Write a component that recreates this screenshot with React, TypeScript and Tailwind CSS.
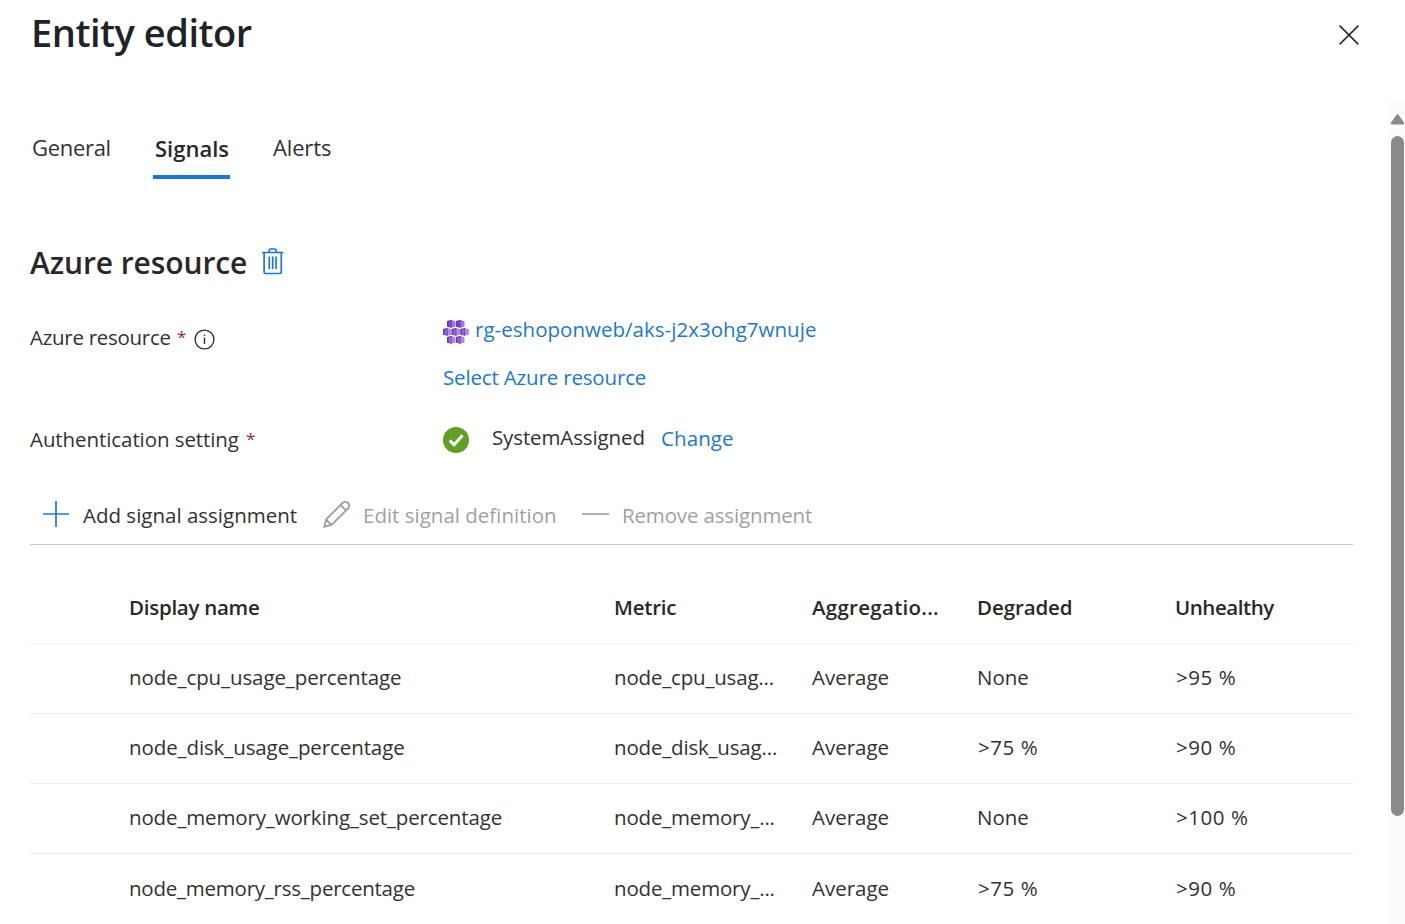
import React from "react";

type Row = { name: string; tracking: string; metric: string; agg: string; degraded: string; unhealthy: string };

const rows: Row[] = [
  { name: "node_cpu_usage_percentage", tracking: "tracking-[-0.1px]", metric: "node_cpu_usag...", agg: "Average", degraded: "None", unhealthy: ">95 %" },
  { name: "node_disk_usage_percentage", tracking: "tracking-[-0.1px]", metric: "node_disk_usag...", agg: "Average", degraded: ">75 %", unhealthy: ">90 %" },
  { name: "node_memory_working_set_percentage", tracking: "tracking-[-0.14px]", metric: "node_memory_...", agg: "Average", degraded: "None", unhealthy: ">100 %" },
  { name: "node_memory_rss_percentage", tracking: "tracking-[-0.23px]", metric: "node_memory_...", agg: "Average", degraded: ">75 %", unhealthy: ">90 %" },
];

const pods = [
  [4, 0], [13, 0],
  [0, 8], [8.7, 8], [17.4, 8],
  [4, 16], [13, 16],
];

function ClusterIcon() {
  return (
    <svg width="26" height="24" viewBox="0 0 26 24" className="mt-[5px] shrink-0">
      {pods.map(([x, y]) => (
        <g key={`${x}-${y}`} transform={`translate(${x} ${y})`}>
          <path d="M0 1.1 4.3 0 8.5 1.2V6.4L4.3 7.8 0 6.6Z" fill={y === 0 ? "#a56cf0" : "#b283f3"} />
          <path d="M0 1.1 4.6 .1V7.7L0 6.6Z" fill="#6a3aa8" />
          <path d="M1.6 1.7 3.9 1.1V6.8L1.6 6.2Z" fill={y === 0 ? "#7d47d0" : "#9b66dc"} />
        </g>
      ))}
    </svg>
  );
}

function TrashIcon() {
  return (
    <svg width="22" height="27" viewBox="0 0 22 27" fill="none" stroke="#1a78d4" strokeWidth="1.7" className="mb-[4px]">
      <path d="M0 4.5H21.4M7.3 4V2.3Q7.3 1 8.6 1H12.8Q14.1 1 14.1 2.3V4M2.1 4.5V24Q2.1 25.5 3.6 25.5H17.8Q19.3 25.5 19.3 24V4.5M7.3 8.5V21M10.7 8.5V21M14.1 8.5V21" />
    </svg>
  );
}

function Threshold({ value }: { value: string }) {
  return value.startsWith(">") ? <span className="pl-[1px] tracking-[0.55px]">{value}</span> : <span>{value}</span>;
}

export default function App() {
  return (
    <div className="flex h-[924px] w-[1405px] flex-col overflow-hidden bg-white font-['Open_Sans','Noto_Sans',sans-serif] text-[20.5px] leading-[28px] whitespace-nowrap text-[#323130]">
      <header className="flex h-[101px] shrink-0 items-start justify-between pl-[31px] pr-[46px]">
        <h1 className="pt-[6px] text-[38px] leading-[52px] font-semibold tracking-[-0.48px] text-[#1f2328]">Entity editor</h1>
        <svg className="mt-[25px]" width="20" height="20" viewBox="0 0 20 20" stroke="#292827" strokeWidth="1.5">
          <path d="M.6.6 19.4 19.4M19.4.6.6 19.4" />
        </svg>
      </header>
      <div className="flex min-h-0 flex-1">
        <main className="w-[1386px] pl-[30px] pr-[33px]">
          <nav className="flex h-[78px] items-end text-[22px] leading-[30px]">
            <div className="ml-[2px] w-[121px] pb-[17px] tracking-[-0.3px]">General</div>
            <div className="w-[77px] border-b-4 border-[#1a78d4] pb-[12px] pl-[2px] font-semibold text-[#292827]">Signals</div>
            <div className="ml-[43px] pb-[17px] tracking-[-0.15px]">Alerts</div>
          </nav>
          <div className="mt-[62px] flex h-[44px] items-center">
            <h2 className="w-[232px] text-[30px] leading-[44px] font-semibold tracking-[-0.1px] text-[#292827]">Azure resource</h2>
            <TrashIcon />
          </div>
          <div className="mt-[30px] flex h-[76px]">
            <div className="flex w-[413px] items-start pt-[8px]">
              <span className="w-[147px] tracking-[-0.28px]">Azure resource</span>
              <span className="w-[17px] text-[17px] text-[#a4262c]">*</span>
              <svg className="mt-[6px]" width="21" height="21" viewBox="0 0 21 21" fill="none" stroke="#323130" strokeWidth="1.4">
                <circle cx="10.5" cy="10.5" r="9.4" />
                <path d="M10.5 8.5V15M10.5 5.4V7" />
              </svg>
            </div>
            <div className="flex flex-col gap-[20px] text-[#1a78d4]">
              <a className="flex h-[28px] items-center gap-[6px]"><ClusterIcon /><span className="tracking-[0.03px]">rg-eshoponweb/aks-j2x3ohg7wnuje</span></a>
              <a className="tracking-[-0.16px]">Select Azure resource</a>
            </div>
          </div>
          <div className="mt-[34px] flex h-[28px] items-center">
            <div className="flex w-[413px]">
              <span className="w-[216px] tracking-[-0.08px]">Authentication setting</span>
              <span className="text-[17px] text-[#a4262c]">*</span>
            </div>
            <svg className="mt-[2px]" width="26" height="26" viewBox="0 0 26 26">
              <circle cx="13" cy="13" r="13" fill="#5ea224" />
              <path d="m6.8 13.4 4.2 4.3 8.6-9.5" fill="none" stroke="#fff" strokeWidth="3" />
            </svg>
            <span className="mb-[4px] ml-[23px] w-[169px] tracking-[-0.12px]">SystemAssigned</span>
            <a className="mb-[2px] tracking-[0.1px] text-[#1a78d4]">Change</a>
          </div>
          <div className="mt-[34px] flex h-[58px] items-center border-b border-[#c8c6c4] pb-[2px] pl-[13px]">
            <svg className="mb-[1px]" width="26" height="26" viewBox="0 0 26 26" stroke="#1a78d4" strokeWidth="1.7"><path d="M0 13H26M13 0V26" /></svg>
            <span className="ml-[14px] w-[240px]">Add signal assignment</span>
            <svg className="mb-[1px]" width="27" height="27" viewBox="0 0 27 27" fill="none" stroke="#a19f9d" strokeWidth="1.8">
              <path d="M1.3 25.7 3 18.5 19.5 2A3.8 3.8 0 0 1 25 7.5L8.5 24ZM3 18.5 8.5 24M17.5 4 23 9.5" />
            </svg>
            <span className="ml-[13px] w-[219px] text-[#a19f9d]">Edit signal definition</span>
            <svg className="mb-[1px]" width="27" height="26" viewBox="0 0 27 26" stroke="#a19f9d" strokeWidth="1.7"><path d="M0 13H27" /></svg>
            <span className="ml-[13px] tracking-[-0.15px] text-[#a19f9d]">Remove assignment</span>
          </div>
          <section className="mt-[28px] grid grid-cols-[99px_485px_198px_165px_198px_178px]">
            <div className="col-span-6 grid h-[71px] grid-cols-subgrid items-center border-b border-[#f3f2f1] pb-[2px] font-semibold text-[#292827]">
              <span />
              <span className="tracking-[-0.27px]">Display name</span>
              <span className="tracking-[-0.2px]">Metric</span>
              <span className="tracking-[0.28px]">Aggregatio...</span>
              <span className="tracking-[-0.1px]">Degraded</span>
              <span className="tracking-[-0.45px]">Unhealthy</span>
            </div>
            {rows.map((r) => (
              <div key={r.name} className="col-span-6 grid h-[70px] grid-cols-subgrid items-center border-b border-[#edebe9] pb-[4px] last:h-[71px] last:pb-[3px]">
                <span />
                <span className={r.tracking}>{r.name}</span>
                <span className="tracking-[-0.18px]">{r.metric}</span>
                <span>{r.agg}</span>
                <Threshold value={r.degraded} />
                <Threshold value={r.unhealthy} />
              </div>
            ))}
          </section>
        </main>
        <aside className="flex w-[19px] flex-col items-end bg-[#fcfcfc] pt-[12px]">
          <svg width="15" height="12" viewBox="0 0 15 12"><path d="M2 10.2 7.5 2.5 13 10.2Z" fill="#8a8a8a" stroke="#8a8a8a" strokeWidth="2.5" strokeLinejoin="round" /></svg>
          <div className="mt-[11px] mr-[1px] h-[680px] w-[13px] rounded-full bg-[#8a8a8a]" />
        </aside>
      </div>
    </div>
  );
}
